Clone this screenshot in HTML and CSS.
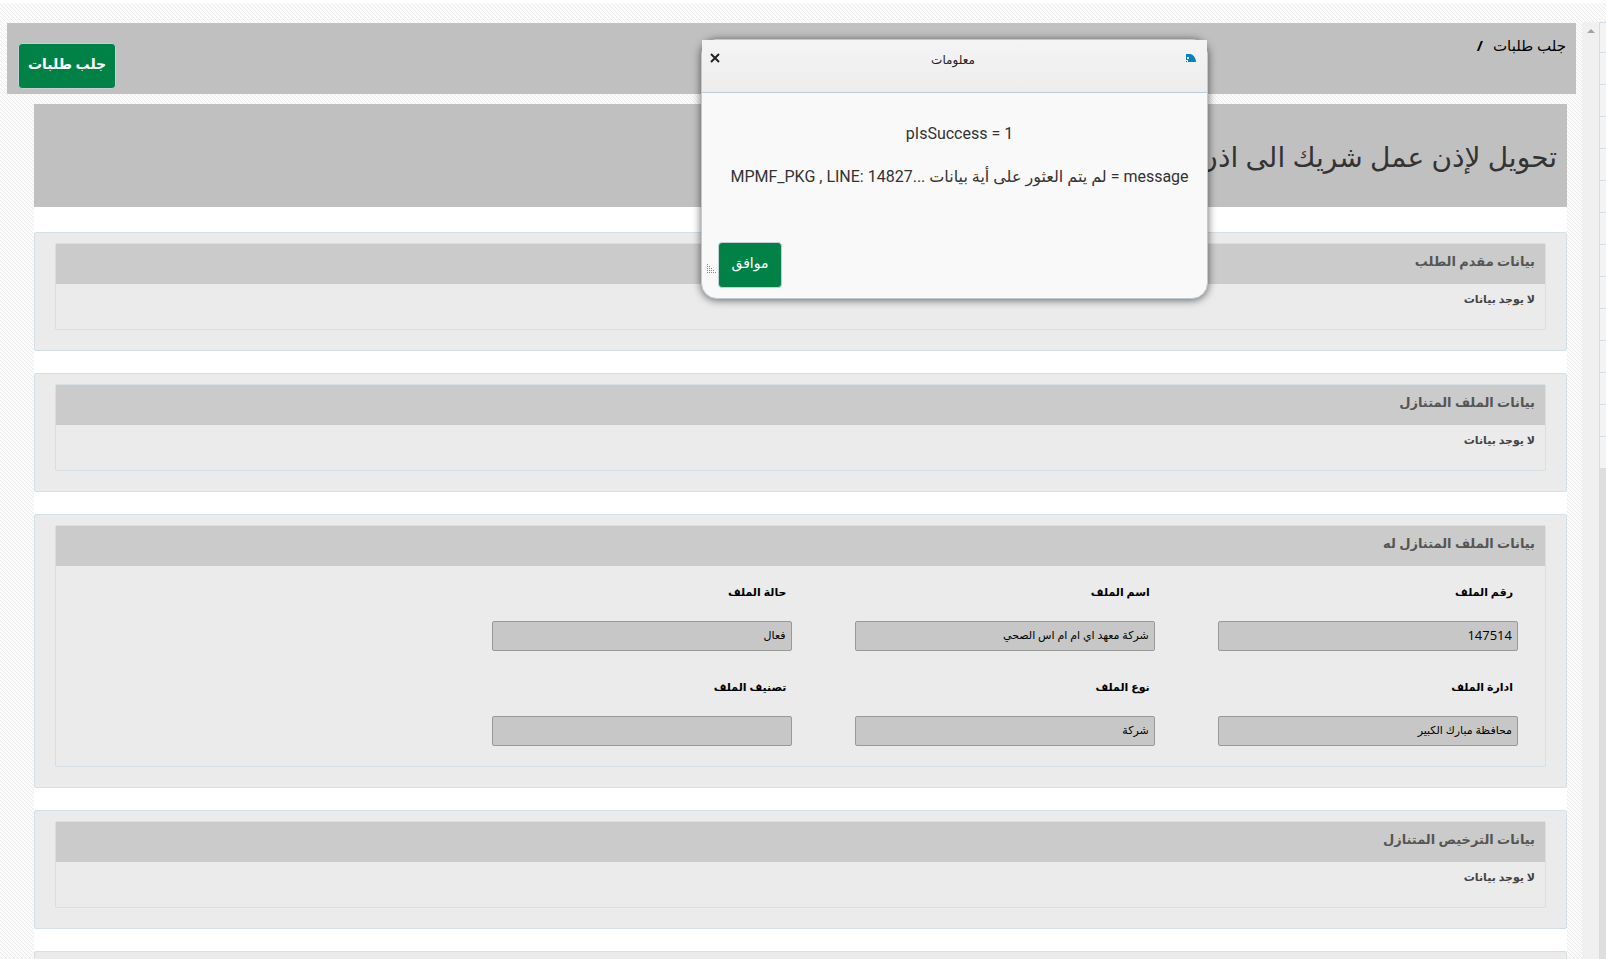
FILE: index.html
```html
<!DOCTYPE html>
<html lang="ar" dir="rtl">
<head>
  <meta charset="UTF-8">
  <meta name="viewport" content="width=device-width, initial-scale=1.0">
  <title>جلب طلبات</title>
  <link rel="stylesheet" href="styles.css">
</head>
<body>
  <div class="layout">
    <aside class="side">
      <ul class="side-list">
        <li></li><li></li><li></li><li></li><li></li><li></li><li></li>
        <li></li><li></li><li></li><li></li><li></li><li></li><li></li>
      </ul>
    </aside>
    <div class="scroll-track">
      <svg class="scroll-up" width="8" height="4" viewBox="0 0 8 4"><path d="M4 0L8 4H0z" fill="#a3a3a3"/></svg>
    </div>

    <main class="main">
      <header class="topbar">
        <nav class="breadcrumb"><a href="#">جلب طلبات</a><span class="sep">/</span></nav>
        <button type="button" class="btn">جلب طلبات</button>
      </header>

      <div class="content">
        <div class="page-title">
          <h1>تحويل لإذن عمل شريك الى اذن عمل</h1>
        </div>

        <section class="panel">
          <div class="panel-inner">
            <h2>بيانات مقدم الطلب</h2>
            <p class="no-data">لا يوجد بيانات</p>
          </div>
        </section>

        <section class="panel">
          <div class="panel-inner">
            <h2>بيانات الملف المتنازل</h2>
            <p class="no-data">لا يوجد بيانات</p>
          </div>
        </section>

        <section class="panel">
          <div class="panel-inner">
            <h2>بيانات الملف المتنازل له</h2>
            <div class="fields">
              <div class="field">
                <label for="fileNo">رقم الملف</label>
                <input type="text" id="fileNo" class="num" value="147514" readonly>
              </div>
              <div class="field">
                <label for="fileName">اسم الملف</label>
                <input type="text" id="fileName" value="شركة معهد اي ام ام اس الصحي" readonly>
              </div>
              <div class="field">
                <label for="fileStatus">حالة الملف</label>
                <input type="text" id="fileStatus" value="فعال" readonly>
              </div>
              <div class="field first">
                <label for="fileDept">ادارة الملف</label>
                <input type="text" id="fileDept" value="محافظة مبارك الكبير" readonly>
              </div>
              <div class="field">
                <label for="fileType">نوع الملف</label>
                <input type="text" id="fileType" value="شركة" readonly>
              </div>
              <div class="field">
                <label for="fileClass">تصنيف الملف</label>
                <input type="text" id="fileClass" value="" readonly>
              </div>
            </div>
          </div>
        </section>

        <section class="panel">
          <div class="panel-inner">
            <h2>بيانات الترخيص المتنازل</h2>
            <p class="no-data">لا يوجد بيانات</p>
          </div>
        </section>

        <section class="panel">
          <div class="panel-inner"></div>
        </section>
      </div>
    </main>
  </div>

  <div class="dialog" role="dialog" aria-labelledby="dialogTitle">
    <div class="dialog-head">
      <svg class="dialog-icon" width="10" height="8" viewBox="0 0 10 8">
        <path d="M0 0H4C7 0 10 4 10 8H2V6H0z" fill="#0082c8"/>
        <path d="M1 3H3V5H1zM0 6H2V8H0z" fill="#fff"/>
        <path d="M0 7H1V8H0z" fill="#0082c8"/>
      </svg>
      <span id="dialogTitle" class="dialog-title">معلومات</span>
      <button type="button" class="dialog-close" aria-label="إغلاق">
        <svg width="10" height="10" viewBox="0 0 10 10"><path d="M1 1L9 9M9 1L1 9" stroke="#222" stroke-width="2"/></svg>
      </button>
    </div>
    <div class="dialog-body">
      <p dir="ltr">pIsSuccess = 1</p>
      <p>message = لم يتم العثور على أية بيانات ...MPMF_PKG , LINE: 14827</p>
    </div>
    <div class="dialog-foot">
      <button type="button" class="btn btn-ok">موافق</button>
      <svg class="grip" width="9" height="9" viewBox="0 0 9 9">
        <path d="M0 .5H1M0 2.5H3M0 4.5H5M0 6.5H7M0 8.5H9" stroke="#888" stroke-dasharray="1 1"/>
      </svg>
    </div>
  </div>
</body>
</html>
```
FILE: styles.css
```css
* {
  box-sizing: border-box;
}

body {
  margin: 0;
  border-top: 3px solid #fff;
  height: 100vh;
  overflow: hidden;
  font-family: "Open Sans", "DejaVu Sans", sans-serif;
  font-size: 12px;
  color: #000;
  background: #fbfbfb url("data:image/svg+xml,%3Csvg xmlns='http://www.w3.org/2000/svg' width='4' height='4' shape-rendering='crispEdges'%3E%3Cpath d='M0 0h1v1H0zM1 1h1v1H1zM2 2h1v1H2zM3 3h1v1H3z' fill='%23ebebeb'/%3E%3C/svg%3E");
}

h1, h2, p, ul {
  margin: 0;
  padding: 0;
  font-weight: normal;
}

.layout {
  display: flex;
  align-items: flex-start;
  height: 100%;
  overflow: hidden;
}

/* strip of the side menu */
.side {
  flex: none;
  width: 7px;
  height: 100vh;
  margin-top: 19px;
  background: #dedede;
  border-left: 1px solid #d5dde3;
}

.side-list {
  list-style: none;
  background: #f4f4f4;
}

.side-list li {
  height: 32px;
  border-top: 1px solid #d5dde3;
}

.side-list li:first-child {
  height: 30px;
}

.scroll-track {
  flex: none;
  width: 17px;
  height: 100vh;
  margin-top: 19px;
  padding-top: 7px;
  background: #f0f0f0;
}

.scroll-up {
  display: block;
  margin: 0 auto;
}

.main {
  flex: 1;
  padding: 20px 6px 0 7px;
}

.topbar {
  display: flex;
  justify-content: space-between;
  height: 71px;
  padding: 12px 10px 0 11px;
  background: #c0c0c0;
}

.breadcrumb {
  font-size: 15px;
  line-height: 20px;
}

.breadcrumb a {
  color: #000;
  text-decoration: none;
}

.sep {
  margin-right: 10px;
  font-weight: bold;
}

.btn {
  height: 46px;
  padding: 0 9px 6px;
  border: 1px solid #c3d0d6;
  border-radius: 4px;
  background: #008247;
  color: #fff;
  font-family: inherit;
  font-size: 14px;
  font-weight: bold;
}

.topbar .btn {
  margin-top: 8px;
}

.content {
  margin: 10px 9px 0 27px;
  background: #fff;
}

.page-title {
  height: 103px;
  margin-bottom: 25px;
  padding: 28px 10px 0;
  background: #c0c0c0;
}

.page-title h1 {
  font-size: 28px;
  line-height: 48px;
  color: #333;
}

.panel {
  margin-bottom: 22px;
  padding: 10px 20px 20px;
  border: 1px solid #d5dfe6;
  border-radius: 2px;
  background: #ebebeb;
}

.panel-inner {
  min-height: 87px;
  border: 1px solid #d5dfe6;
  border-radius: 2px;
}

.panel h2 {
  height: 40px;
  padding: 0 10px;
  background: #cbcbcb;
  color: #555;
  font-size: 13px;
  font-weight: bold;
  line-height: 34px;
}

.no-data {
  padding: 5px 10px 0;
  color: #444;
  font-size: 11px;
  font-weight: bold;
  line-height: 20px;
}

.fields {
  display: grid;
  grid-template-columns: repeat(4, 1fr);
  row-gap: 26px;
  padding: 16px 18px 20px;
}

.field {
  padding: 0 9px;
}

.field.first {
  grid-column-start: 1;
}

.field label {
  display: block;
  margin-bottom: 19px;
  padding-right: 5px;
  font-size: 11px;
  font-weight: bold;
  line-height: 20px;
}

.field input {
  display: block;
  width: 300px;
  max-width: 100%;
  height: 30px;
  padding: 0 5px 3px;
  border: 1px solid #999;
  border-radius: 2px;
  background: #c7c7c7;
  color: #000;
  font-family: inherit;
  font-size: 11px;
}

.field .num {
  font-size: 13px;
}

/* message box */
.dialog {
  position: absolute;
  top: 39px;
  right: 398px;
  width: 507px;
  height: 260px;
  border: 1px solid #bccbd8;
  border-radius: 16px;
  background: #f9f9f9;
  box-shadow: 0 1px 8px rgba(0, 0, 0, 0.6);
}

.dialog-head {
  display: flex;
  justify-content: space-between;
  align-items: flex-start;
  height: 53px;
  padding: 14px 11px 0 8px;
  border-bottom: 1px solid #bccbd8;
  background: linear-gradient(#f4f4f4, #ededed);
}

.dialog-title {
  font-size: 12px;
  line-height: 12px;
  color: #222;
}

.dialog-close {
  display: block;
  height: 10px;
  margin-top: -1px;
  padding: 0;
  border: 0;
  background: none;
}

.dialog-close svg {
  display: block;
}

.dialog-body {
  height: 149px;
  padding: 31px 14px 0 24px;
  color: #333;
  font-family: Roboto, "DejaVu Sans", sans-serif;
  font-size: 16px;
  font-weight: 500;
  line-height: 20px;
  text-align: center;
}

.dialog-body p {
  margin-bottom: 23px;
}

.dialog-foot {
  display: flex;
  justify-content: flex-end;
  align-items: flex-end;
  gap: 2px;
  padding: 0 0 0 5px;
}

.btn-ok {
  width: 64px;
  font-weight: normal;
}

.grip {
  margin-bottom: 15px;
}
```
